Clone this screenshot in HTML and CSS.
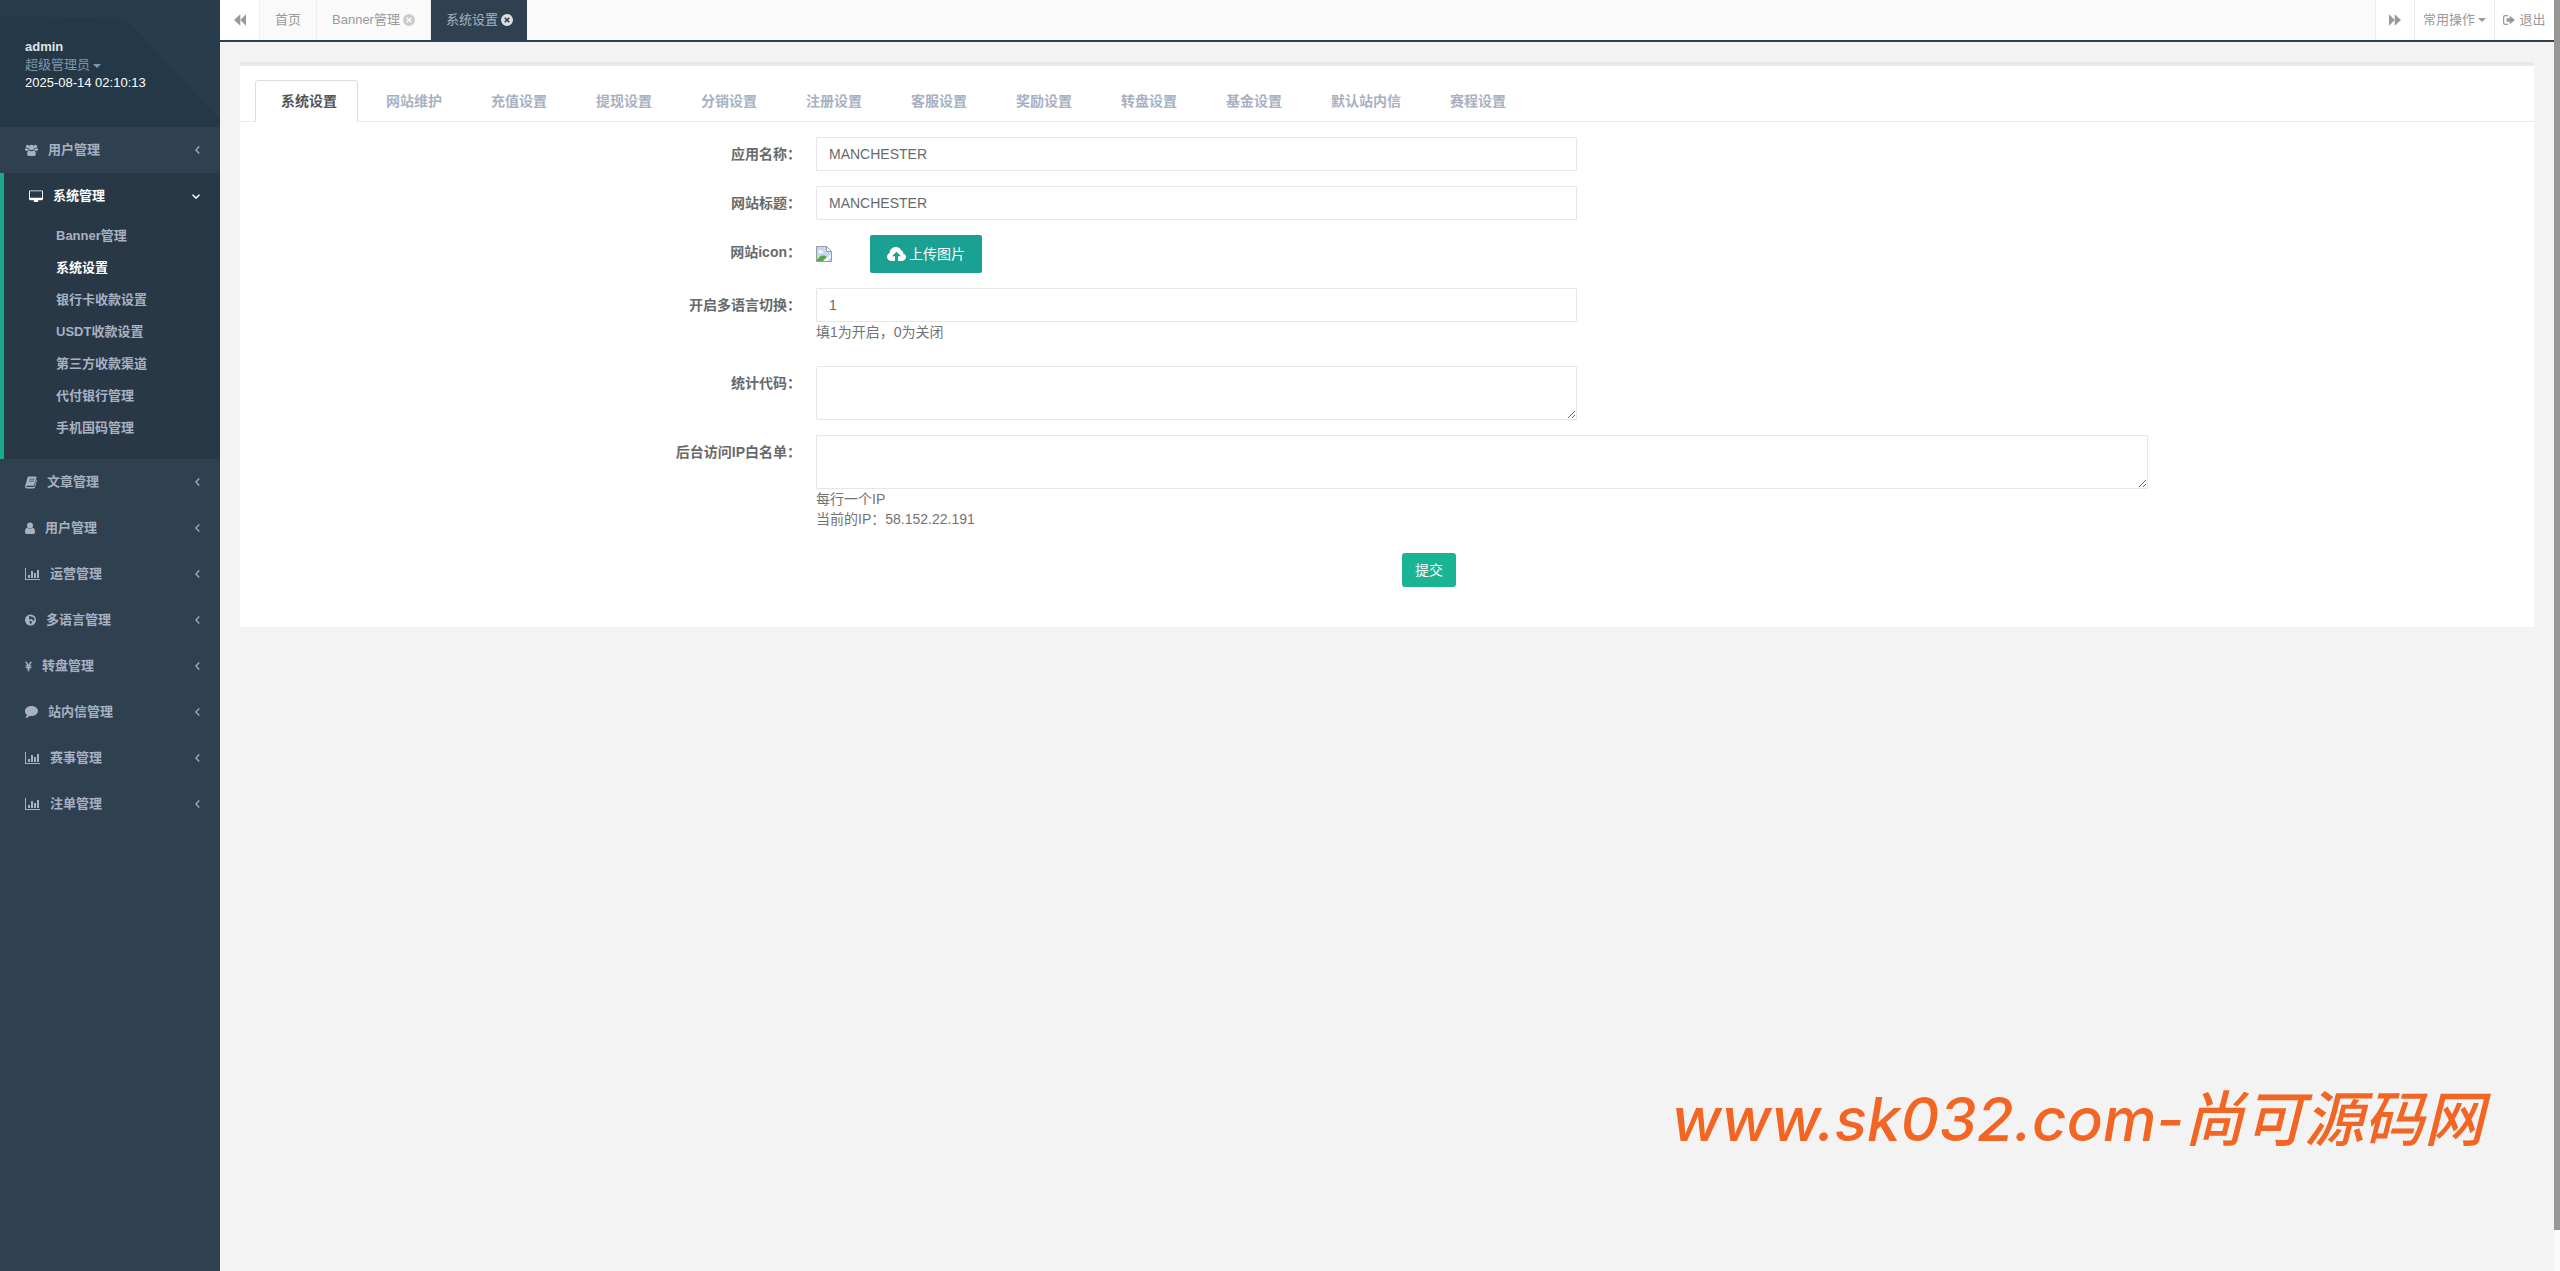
FILE: index.html
```
<!DOCTYPE html>
<html lang="zh-CN">
<head>
  <meta charset="UTF-8">
  <meta name="viewport" content="width=device-width, initial-scale=1.0">
  <title>系统设置</title>
  <link rel="stylesheet" href="styles.css">
</head>
<body>
  <!-- 图标 -->
  <svg class="sprite" aria-hidden="true">
    <symbol id="i-users" viewBox="0 0 15 14">
      <circle cx="3" cy="3" r="2"/><circle cx="12" cy="3" r="2"/><circle cx="7.500" cy="4" r="3"/>
      <path d="M0 6.500C0 5.500.5 5 1.200 5c.8.5 2 .6 2.800.2.200 1 .5 1.600 1 2.100C4 7.400 3.400 7.700 3 8H1.500C.5 8 0 7.500 0 6.500zM15 6.500C15 5.500 14.500 5 13.800 5c-.8.5-2 .6-2.800.2-.2 1-.5 1.600-1 2.100 1 .1 1.600.4 2 .7h1.500c1 0 1.500-.5 1.500-1.500z"/>
      <path d="M5 7.600c1.500 1 3.500 1 5 0 1.800.2 2.500 2 2.500 4 0 1.400-.8 2.400-2.200 2.400H4.700c-1.400 0-2.200-1-2.200-2.400 0-2 .7-3.800 2.500-4z"/>
    </symbol>
    <symbol id="i-desktop" viewBox="0 0 15 14">
      <path fill-rule="evenodd" d="M1.200 1h12.600c.7 0 1.200.5 1.200 1.200v8.100c0 .7-.5 1.200-1.200 1.200H9.500c0 .6.5 1 .5 1.500 0 .3-.2.500-.5.500h-4c-.3 0-.5-.2-.5-.5 0-.5.5-.9.500-1.500H1.200C.5 11.500 0 11 0 10.300V2.200C0 1.500.5 1 1.200 1zM1 2.300v6.400c0 .2.100.3.300.3h12.400c.2 0 .3-.1.300-.3V2.300c0-.2-.1-.3-.3-.3H1.300c-.2 0-.3.100-.3.300z"/>
    </symbol>
    <symbol id="i-book" viewBox="0 0 13 14">
      <path fill-rule="evenodd" d="M4.500 1h7c.8 0 1.100.600.900 1.300l-2.200 7.300c-.2.800-.7 1.400-1.500 1.400H2c-.5 0-.9.200-.9.700 0 .6.600.8 1.100.8h7c.6 0 .9-.3 1.100-.9l2.200-7.300c.5.300.6.900.4 1.400l-2.100 7c-.2.700-.9 1.300-1.600 1.300h-7C1 14 .2 13.200 0 12.200c-.1-.6.100-.9.200-1.400L2.700 2.600C3 1.500 3.500 1 4.500 1zM5 3.500l-.2.800h5.400l.3-.8zM4.400 5.600l-.3.800h5.400l.3-.8z"/>
    </symbol>
    <symbol id="i-user" viewBox="0 0 10 14">
      <circle cx="5" cy="4.500" r="3"/>
      <path d="M2.400 6.800c1.600 1.200 3.600 1.200 5.200 0C9.500 7 10 9 10 10.900 10 12.200 9.200 13 8.100 13H1.900C.8 13 0 12.200 0 10.900 0 9 .5 7 2.400 6.800z"/>
    </symbol>
    <symbol id="i-chart" viewBox="0 0 15 12">
      <path d="M0 0h1v11h14v1H0zM3 7h2v3H3zM6 3h2v7H6zM9 5h2v5H9zM12 2h2v8h-2z"/>
    </symbol>
    <symbol id="i-globe" viewBox="0 0 12 12">
      <path fill-rule="evenodd" d="M6 0a6 6 0 1 1 0 12A6 6 0 0 1 6 0zM5.200 1.500 4 2.600l.8.700-.6 1.200 1.600 1.200L7 4.600l1.300.3L8 6.300l1.300.9.900-1.200.2-1.600-.9-.5-.7-1.200-1.400-.3zM4.600 7.200l.5 1.300 1 2 1-.9.700-1.300-1.400-1.200z"/>
    </symbol>
    <symbol id="i-yen" viewBox="0 0 8 11">
      <path d="M0 0h2.100L4 3.600 5.900 0H8L5.600 4.200h1.700v1.200H5v.8h2.300v1.200H5V11H3V7.400H.7V6.200H3v-.8H.7V4.200h1.700z"/>
    </symbol>
    <symbol id="i-comment" viewBox="0 0 13 12">
      <path d="M6.500 0C10.100 0 13 2.200 13 5s-2.900 5-6.500 5c-.6 0-1.200-.1-1.700-.2C3.800 10.900 2.600 11.700 1 12c-.3 0-.5-.3-.3-.6.6-.7 1-1.300 1.200-2.400C.7 8 0 6.600 0 5c0-2.800 2.900-5 6.500-5z"/>
    </symbol>
    <symbol id="i-left" viewBox="0 0 5 8"><path d="M4.300.500.900 4l3.400 3.500" fill="none" stroke="currentColor" stroke-width="1.200"/></symbol>
    <symbol id="i-down" viewBox="0 0 8 5"><path d="M.5.700 4 4.100 7.500.7" fill="none" stroke="currentColor" stroke-width="1.500"/></symbol>
    <symbol id="i-forward" viewBox="0 0 12 12"><path d="M0 .3 5.700 6v-5.700L12 6 5.700 11.700V6L0 11.700z"/></symbol>
    <symbol id="i-close" viewBox="0 0 12 12">
      <path fill-rule="evenodd" d="M6 0a6 6 0 1 1 0 12A6 6 0 0 1 6 0zM3.200 4.300 4.900 6 3.200 7.700l1.100 1.100L6 7.100l1.700 1.700 1.100-1.100L7.100 6l1.700-1.700-1.100-1.100L6 4.900 4.300 3.200z"/>
    </symbol>
    <symbol id="i-signout" viewBox="0 0 12 10">
      <path d="M5 .6H2.300C1.300.6.600 1.300.600 2.300v5.400c0 1 .7 1.700 1.700 1.700H5" fill="none" stroke="currentColor" stroke-width="1.200"/>
      <path d="M3.600 3.200h3.200V.7L12 5 6.800 9.300V6.800H3.600z"/>
    </symbol>
    <symbol id="i-cloud" viewBox="0 0 19 14">
      <path fill-rule="evenodd" d="M9 0c2.500 0 4.500 1.400 5.200 3.600 1.500.3 2.200 1.400 2 2.800 1.700.6 2.800 2 2.800 3.700 0 2.200-1.800 3.900-4 3.900h-4V9.200h3L9.500 4.700 5 9.200h3V14H4.600C2 14 0 12.200 0 9.800c0-1.700 1-3.200 2.700-3.900C2.700 2.500 5.400 0 9 0z"/>
    </symbol>
    <symbol id="i-broken" viewBox="0 0 16 16">
      <path d="M.5.500h10l5 5v10H.5z" fill="#c6d6f3" stroke="#9b9b9b"/>
      <path d="M10.500.500v5h5z" fill="#fff" stroke="#9b9b9b"/>
      <path d="M3 5.500C3 4 5 3.500 5.500 5c1.500-.3 2 1.500 1 2H3C1.800 7 2 5.500 3 5.500z" fill="#fff"/>
      <path d="M1 15v-1c2-3 4-5 6.500-4.500 1.500 0 2.500.7 3.200 1.500L7 15z" fill="#56a846"/>
      <path d="M15 8.500v2.500l-4 4H7.500z" fill="#fff"/>
    </symbol>
  </svg>

  <div class="wrapper">
    <nav class="sidebar">
      <div class="profile">
        <strong class="profile-name">admin</strong>
        <a class="profile-role" href="#">超级管理员<b class="caret"></b></a>
        <span class="profile-time">2025-08-14 02:10:13</span>
      </div>
      <ul class="menu">
        <li><a href="#"><svg class="ico w13"><use href="#i-users"/></svg>用户管理<svg class="arrow"><use href="#i-left"/></svg></a></li>
        <li class="active">
          <a href="#"><svg class="ico w14"><use href="#i-desktop"/></svg>系统管理<svg class="arrow down"><use href="#i-down"/></svg></a>
          <ul class="submenu">
            <li><a href="#">Banner管理</a></li>
            <li class="current"><a href="#">系统设置</a></li>
            <li><a href="#">银行卡收款设置</a></li>
            <li><a href="#">USDT收款设置</a></li>
            <li><a href="#">第三方收款渠道</a></li>
            <li><a href="#">代付银行管理</a></li>
            <li><a href="#">手机国码管理</a></li>
          </ul>
        </li>
        <li><a href="#"><svg class="ico w12"><use href="#i-book"/></svg>文章管理<svg class="arrow"><use href="#i-left"/></svg></a></li>
        <li><a href="#"><svg class="ico w10"><use href="#i-user"/></svg>用户管理<svg class="arrow"><use href="#i-left"/></svg></a></li>
        <li><a href="#"><svg class="ico w15"><use href="#i-chart"/></svg>运营管理<svg class="arrow"><use href="#i-left"/></svg></a></li>
        <li><a href="#"><svg class="ico w11"><use href="#i-globe"/></svg>多语言管理<svg class="arrow"><use href="#i-left"/></svg></a></li>
        <li><a href="#"><svg class="ico w7"><use href="#i-yen"/></svg>转盘管理<svg class="arrow"><use href="#i-left"/></svg></a></li>
        <li><a href="#"><svg class="ico w13"><use href="#i-comment"/></svg>站内信管理<svg class="arrow"><use href="#i-left"/></svg></a></li>
        <li><a href="#"><svg class="ico w15"><use href="#i-chart"/></svg>赛事管理<svg class="arrow"><use href="#i-left"/></svg></a></li>
        <li><a href="#"><svg class="ico w15"><use href="#i-chart"/></svg>注单管理<svg class="arrow"><use href="#i-left"/></svg></a></li>
      </ul>
    </nav>

    <div class="page">
      <!-- 顶部标签栏 -->
      <div class="topbar">
        <button class="roll" type="button" aria-label="向左"><svg class="ico w12 flip"><use href="#i-forward"/></svg></button>
        <div class="page-tabs">
          <a href="#">首页</a>
          <a href="#">Banner管理<svg class="close"><use href="#i-close"/></svg></a>
          <a href="#" class="active">系统设置<svg class="close"><use href="#i-close"/></svg></a>
        </div>
        <button class="roll roll-right" type="button" aria-label="向右"><svg class="ico w12"><use href="#i-forward"/></svg></button>
        <button class="roll ops" type="button">常用操作<b class="caret"></b></button>
        <a class="logout" href="#"><svg class="ico w12"><use href="#i-signout"/></svg>退出</a>
      </div>

      <main class="content">
        <div class="box">
          <div class="nav-tabs">
            <a href="#" class="active">系统设置</a>
            <a href="#">网站维护</a>
            <a href="#">充值设置</a>
            <a href="#">提现设置</a>
            <a href="#">分销设置</a>
            <a href="#">注册设置</a>
            <a href="#">客服设置</a>
            <a href="#">奖励设置</a>
            <a href="#">转盘设置</a>
            <a href="#">基金设置</a>
            <a href="#">默认站内信</a>
            <a href="#">赛程设置</a>
          </div>
          <form class="form">
            <div class="form-group">
              <label for="appName">应用名称：</label>
              <div class="field"><input id="appName" type="text" value="MANCHESTER"></div>
            </div>
            <div class="form-group">
              <label for="siteTitle">网站标题：</label>
              <div class="field"><input id="siteTitle" type="text" value="MANCHESTER"></div>
            </div>
            <div class="form-group">
              <label for="upload">网站icon：</label>
              <div class="field upload">
                <svg class="broken"><use href="#i-broken"/></svg>
                <button id="upload" class="btn-upload" type="button"><svg class="cloud"><use href="#i-cloud"/></svg>上传图片</button>
              </div>
            </div>
            <div class="form-group with-help">
              <label for="multiLang">开启多语言切换：</label>
              <div class="field">
                <input id="multiLang" type="text" value="1">
                <span class="help">填1为开启，0为关闭</span>
              </div>
            </div>
            <div class="form-group">
              <label for="statCode">统计代码：</label>
              <div class="field"><textarea id="statCode"></textarea></div>
            </div>
            <div class="form-group with-help">
              <label for="ipList">后台访问IP白名单：</label>
              <div class="field wide">
                <textarea id="ipList"></textarea>
                <span class="help">每行一个IP<br>当前的IP：58.152.22.191</span>
              </div>
            </div>
            <div class="form-submit"><button class="btn-submit" type="submit">提交</button></div>
          </form>
        </div>
      </main>
    </div>
  </div>

  <div class="watermark">www.sk032.com-<span>尚可源码网</span></div>
  <div class="scrollbar"></div>
</body>
</html>
```
FILE: styles.css
```
* {
  box-sizing: border-box;
}

body {
  margin: 0;
  font-family: "Liberation Sans", "Noto Sans CJK SC", sans-serif;
  font-size: 13px;
  line-height: 18px;
  color: #676a6c;
  background-color: #2f4050;
}

a {
  color: inherit;
  text-decoration: none;
}

ul {
  margin: 0;
  padding: 0;
  list-style: none;
}

button,
input,
textarea {
  font: inherit;
  color: inherit;
}

svg {
  fill: currentColor;
}

.sprite {
  display: none;
}

.wrapper {
  display: flex;
  min-height: 100vh;
  padding-right: 6px;
}

.caret {
  display: inline-block;
  margin-left: 3px;
  vertical-align: middle;
  border-top: 4px solid;
  border-left: 4px solid transparent;
  border-right: 4px solid transparent;
}

/* 图标宽度 */
.ico {
  flex: none;
  height: 14px;
}

.w7 { width: 7px; height: 11px; }
.w10 { width: 10px; }
.w11 { width: 11px; }
.w12 { width: 12px; }
.w13 { width: 13px; }
.w14 { width: 14px; }
.w15 { width: 15px; }

.flip {
  transform: scaleX(-1);
}

/* 侧边栏 */
.sidebar {
  flex: none;
  width: 220px;
  background-color: #2f4050;
  color: #a7b1c2;
}

.profile {
  display: flex;
  flex-direction: column;
  height: 127px;
  padding: 38px 25px;
  background-color: #253847;
  background-image:
    linear-gradient(47deg, transparent 67%, #293c4c 67%),
    linear-gradient(182deg, #293c4c 22px, transparent 24px);
}

.profile-name {
  color: #dfe4ed;
}

.profile-role {
  color: #8095a8;
}

.profile-time {
  color: #fff;
}

.menu a {
  display: flex;
  align-items: center;
  padding: 14px 20px 14px 25px;
  font-weight: bold;
}

.menu .ico {
  margin-right: 10px;
}

.menu .arrow {
  width: 5px;
  height: 8px;
  margin-left: auto;
}

.menu .arrow.down {
  width: 8px;
  height: 5px;
}

.menu .active {
  padding-bottom: 15px;
  border-left: 4px solid #19aa8d;
  background-color: #293846;
}

.menu .active > a,
.submenu .current {
  color: #fff;
}

.submenu {
  padding-top: 1px;
}

.submenu a {
  padding: 7px 10px 7px 52px;
}

/* 顶部 */
.page {
  flex: 1;
  min-width: 0;
  background-color: #f3f3f4;
}

.topbar {
  display: flex;
  height: 42px;
  background-color: #fafafa;
  border-bottom: 2px solid #2f4050;
  color: #999;
}

.roll {
  display: flex;
  align-items: center;
  justify-content: center;
  width: 40px;
  padding: 0;
  border: 0;
  border-right: 1px solid #eee;
  background-color: #fff;
  color: #999;
}

.roll-right {
  border-left: 1px solid #eee;
}

.ops {
  width: 80px;
}

.page-tabs {
  display: flex;
  flex: 1;
}

.page-tabs a {
  display: flex;
  align-items: center;
  padding: 0 15px;
  border-right: 1px solid #eee;
}

.page-tabs .close {
  width: 12px;
  height: 12px;
  margin-left: 3px;
  color: #ccc;
}

.page-tabs .active {
  padding-right: 14px;
  border-right: 0;
  background-color: #2f4050;
  color: #a7b1c2;
}

.page-tabs .active .close {
  color: #ddd;
}

.logout {
  display: flex;
  align-items: center;
  justify-content: center;
  gap: 4px;
  width: 59px;
  background-color: #fff;
}

/* 内容 */
.content {
  padding: 20px;
}

.box {
  padding: 14px 0 40px;
  border-top: 4px solid #e7eaec;
  background-color: #fff;
  font-size: 14px;
  line-height: 20px;
}

.nav-tabs {
  display: flex;
  gap: 2px;
  padding-left: 15px;
  border-bottom: 1px solid #e7eaec;
  font-weight: bold;
  color: #a7b1c2;
}

.nav-tabs a {
  margin-bottom: -1px;
  padding: 10px 20px 10px 25px;
  border: 1px solid transparent;
  border-radius: 4px 4px 0 0;
}

.nav-tabs .active {
  border-color: #ddd;
  border-bottom-color: #fff;
  background-color: #fff;
  color: #555;
}

.form {
  padding: 15px 5px 0;
}

.form-group {
  display: flex;
  margin-bottom: 15px;
}

.with-help {
  margin-bottom: 24px;
}

.form-group label {
  width: 25%;
  padding: 7px 15px 0 0;
  text-align: right;
  font-weight: bold;
}

.field {
  width: 33.333%;
}

.field.wide {
  width: 58.333%;
}

.field input,
.field textarea {
  display: block;
  width: 100%;
  height: 34px;
  padding: 6px 12px;
  border: 1px solid #e5e6e7;
  border-radius: 1px;
  background-color: #fff;
}

.field textarea {
  height: 54px;
}

.help {
  display: block;
  color: #737373;
}

.upload {
  display: flex;
  align-items: center;
}

.broken {
  width: 16px;
  height: 16px;
  margin-right: 38px;
}

.btn-upload {
  display: flex;
  align-items: center;
  gap: 3px;
  height: 38px;
  padding: 0 17px;
  border: 0;
  border-radius: 2px;
  background-color: #1aa194;
  color: #fff;
}

.cloud {
  width: 19px;
  height: 14px;
}

.form-submit {
  margin-left: 50%;
  padding-left: 15px;
}

.btn-submit {
  height: 34px;
  padding: 0 13px;
  border: 0;
  border-radius: 3px;
  background-color: #1ab394;
  color: #fff;
}

/* 水印 */
.watermark {
  position: fixed;
  right: 76px;
  bottom: 112px;
  font-family: Inter, "Noto Sans CJK SC", sans-serif;
  font-size: 60px;
  font-style: italic;
  font-weight: 500;
  line-height: 80px;
  color: #f26522;
}

.scrollbar {
  position: fixed;
  top: 0;
  right: 0;
  bottom: 0;
  width: 6px;
  background: linear-gradient(#969696, #969696) no-repeat #fafafa;
  background-size: 6px calc(100% - 41px);
}
```
